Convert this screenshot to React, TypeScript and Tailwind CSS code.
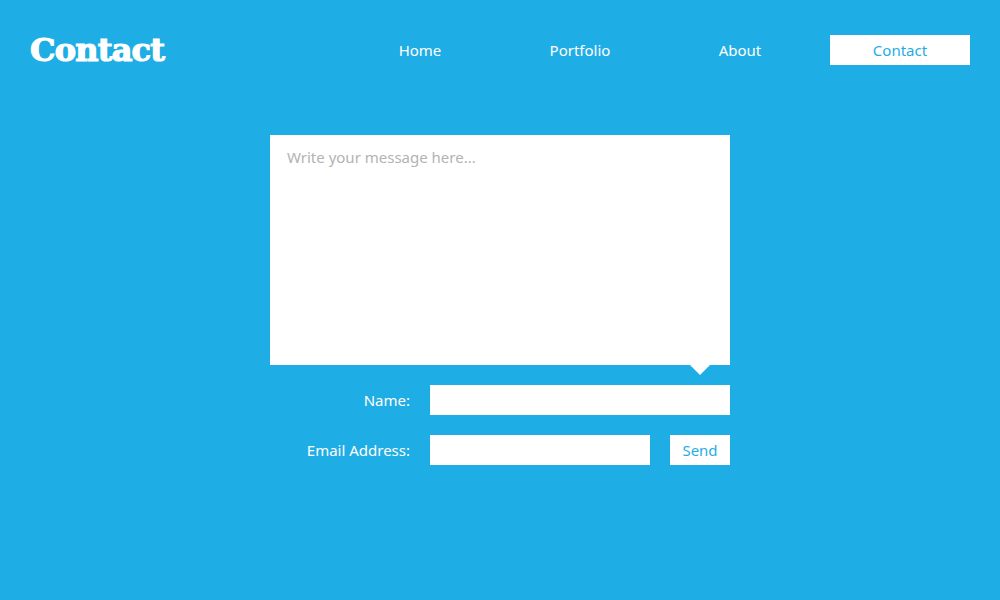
import React from 'react';

const navItems = ['Home', 'Portfolio', 'About', 'Contact'];

export default function App() {
  const active = 'Contact';

  return (
    <div className="w-[1000px] h-[600px] bg-[#1fade5] overflow-hidden font-['Noto_Sans','Open_Sans',sans-serif] text-white">
      <header className="flex items-center justify-between pl-[30px] pr-[30px] pt-[35px]">
        <h1 className="text-[32px] leading-[30px] font-black tracking-[-0.8px] font-['DejaVu_Serif',serif] [-webkit-text-stroke:1.2px_white]">
          Contact
        </h1>
        <nav className="flex gap-5">
          {navItems.map((item) => (
            <a
              key={item}
              href="#"
              className={`w-[140px] h-[30px] flex items-center justify-center text-[15px] ${
                item === active ? 'bg-white text-[#1fade5]' : 'text-white'
              }`}
            >
              {item}
            </a>
          ))}
        </nav>
      </header>

      <form className="w-[460px] mx-auto mt-[70px] flex flex-col" onSubmit={(e) => e.preventDefault()}>
        <div className="relative">
          <textarea
            placeholder="Write your message here..."
            className="block w-[460px] h-[230px] bg-white resize-none outline-none px-[17px] py-[11px] text-[15px] text-gray-700 placeholder:text-[#b3b3b3]"
          />
          {/* speech bubble tail */}
          <div className="absolute left-[420px] top-[230px] w-0 h-0 border-l-[10px] border-r-[10px] border-t-[10px] border-l-transparent border-r-transparent border-t-white" />
        </div>

        <div className="flex items-center mt-5 h-[30px]">
          <label className="w-[140px] text-right text-[15px]">Name:</label>
          <input type="text" className="ml-5 w-[300px] h-[30px] bg-white outline-none px-2 text-gray-700" />
        </div>

        <div className="flex items-center mt-5 h-[30px]">
          <label className="w-[140px] text-right text-[15px]">Email Address:</label>
          <input type="email" className="ml-5 w-[220px] h-[30px] bg-white outline-none px-2 text-gray-700" />
          <button type="submit" className="ml-5 w-[60px] h-[30px] bg-white text-[#1fade5] text-[15px]">
            Send
          </button>
        </div>
      </form>
    </div>
  );
}
